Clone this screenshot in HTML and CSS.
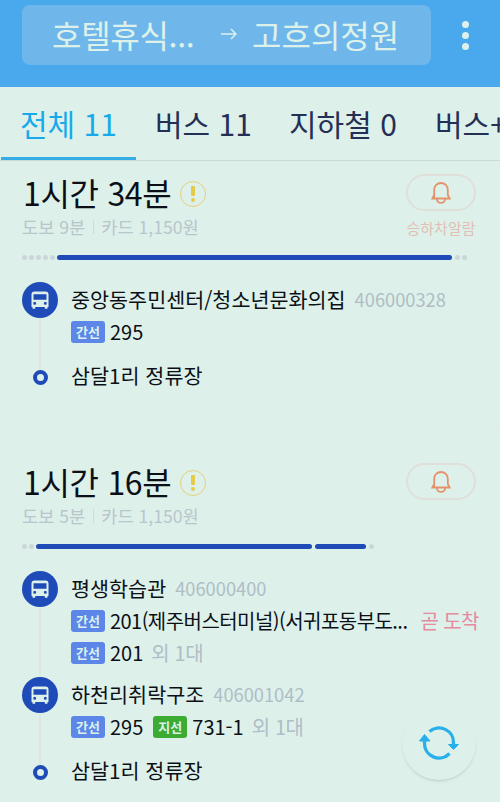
FILE: index.html
```html
<!doctype html>
<html lang="ko">
  <head>
    <meta charset="UTF-8" />
    <meta name="viewport" content="width=device-width, initial-scale=1.0" />
    <title>길찾기</title>
    <link rel="stylesheet" href="styles.css">
  </head>
  <body>
    <svg class="defs">
      <symbol id="bus" viewBox="0 0 18 18">
        <path fill-rule="evenodd" d="M3.5 0.5h11Q17.500 0.500 17.500 3.500V16H16.500V17.800H13.800V16H4.200V17.800H1.500V16H0.500V3.500Q0.500 0.500 3.500 0.500zM2.500 3.200V8.800h13V3.200zM2.200 12.300a1.500 1.500 0 1 0 3 0a1.500 1.500 0 1 0-3 0zM12.800 12.300a1.500 1.500 0 1 0 3 0a1.500 1.500 0 1 0-3 0z" />
      </symbol>
      <symbol id="bell" viewBox="0 0 20 22">
        <path d="M3.200 16V8C3.200 3.800 6.200 1 10 1s6.800 2.800 6.800 7V13L18.600 16.500H1.400L3.200 13M5.800 17c0.600 5.200 7.800 5.200 8.400 0" />
      </symbol>
    </svg>

    <header class="topbar">
      <div class="route">
        <span class="from">호텔휴식...</span>
        <svg class="arrow" viewBox="0 0 16 12"><path d="M0 6H15M10 1l5 5-5 5" /></svg>
        <span class="to">고흐의정원</span>
      </div>
      <div class="more"><i></i><i></i><i></i></div>
    </header>

    <nav class="tabs">
      <div class="tab active">전체 11</div>
      <div class="tab">버스 11</div>
      <div class="tab subway">지하철 0</div>
      <div class="tab">버스+</div>
    </nav>

    <section class="card first">
      <div class="summary">
        <div>
          <h2 class="time">1시간 34분 <span class="warn"></span></h2>
          <div class="detail"><span>도보 9분</span><span>카드 1,150원</span></div>
        </div>
        <div class="alarm">
          <div class="alarm-btn"><svg><use href="#bell" /></svg></div>
          <div class="alarm-label">승하차알람</div>
        </div>
      </div>
      <div class="progress">
        <i></i><i></i><i></i><i></i><i></i>
        <b style="width: 395px"></b>
        <i></i><i></i>
      </div>
      <div class="stop">
        <div class="marker"><span class="bus-icon"><svg><use href="#bus" /></svg></span></div>
        <div>
          <div class="name">중앙동주민센터/청소년문화의집 <small>406000328</small></div>
          <div class="bus"><span class="badge">간선</span><span class="num">295</span></div>
        </div>
      </div>
      <div class="stop dest">
        <div class="marker"><span class="ring"></span></div>
        <div class="name">삼달1리 정류장</div>
      </div>
    </section>

    <section class="card">
      <div class="summary">
        <div>
          <h2 class="time">1시간 16분 <span class="warn"></span></h2>
          <div class="detail"><span>도보 5분</span><span>카드 1,150원</span></div>
        </div>
        <div class="alarm">
          <div class="alarm-btn"><svg><use href="#bell" /></svg></div>
        </div>
      </div>
      <div class="progress">
        <i></i><i></i>
        <b style="width: 276px"></b>
        <b style="width: 51px"></b>
        <i></i>
      </div>
      <div class="stop transfer">
        <div class="marker"><span class="bus-icon"><svg><use href="#bus" /></svg></span></div>
        <div>
          <div class="name">평생학습관 <small>406000400</small></div>
          <div class="bus">
            <span class="badge">간선</span><span class="num long">201(제주버스터미널)(서귀포동부도...</span>
            <span class="soon">곧 도착</span>
          </div>
          <div class="bus"><span class="badge">간선</span><span class="num">201</span><span class="etc">외 1대</span></div>
        </div>
      </div>
      <div class="stop">
        <div class="marker"><span class="bus-icon"><svg><use href="#bus" /></svg></span></div>
        <div>
          <div class="name">하천리취락구조 <small>406001042</small></div>
          <div class="bus">
            <span class="badge">간선</span><span class="num">295</span>
            <span class="badge branch">지선</span><span class="num">731-1</span><span class="etc">외 1대</span>
          </div>
        </div>
      </div>
      <div class="stop dest">
        <div class="marker"><span class="ring"></span></div>
        <div class="name">삼달1리 정류장</div>
      </div>
    </section>

    <div class="refresh">
      <svg viewBox="0 0 40 36">
        <path d="M10.500 6.500A14.500 14.500 0 0 1 34.500 18V22M30.500 28.500A14.500 14.500 0 0 1 5.500 18V13" />
        <path class="head" d="M29.500 19.500L34.500 24.500L39.500 19.500zM0.500 16L5.500 9.500L11 16z" />
      </svg>
    </div>
  </body>
</html>
```

FILE: styles.css
```css
* {
  box-sizing: border-box;
}
body {
  margin: 0;
  width: 500px;
  height: 802px;
  overflow: hidden;
  background-color: #ddf1ea;
  color: #0c0f16;
  font-family: "Noto Sans CJK KR", sans-serif;
  white-space: nowrap;
}
.defs {
  display: none;
}

/* top bar */
.topbar {
  display: flex;
  align-items: flex-start;
  height: 87px;
  padding: 5px 0 0 22px;
  background-color: #4aa8ec;
  color: #ddf1ea;
}
.route {
  display: flex;
  align-items: center;
  width: 409px;
  height: 60px;
  padding: 0 0 2px 30px;
  border-radius: 8px;
  background-color: #6fb7eb;
  font-size: 32px;
  line-height: 58px;
}
.from {
  width: 169px;
  letter-spacing: -0.3px;
}
.arrow {
  width: 16px;
  height: 12px;
  margin-right: 15px;
  fill: none;
  stroke: #ddf1ea;
  stroke-width: 1.5;
}
.more {
  display: flex;
  flex-direction: column;
  gap: 4px;
  margin: 16px 0 0 31px;
}
.more i {
  width: 7px;
  height: 7px;
  border-radius: 50%;
  background-color: #ddf1ea;
}

/* tabs */
.tabs {
  display: flex;
  height: 74px;
  padding-left: 1px;
  overflow: hidden;
  border-bottom: 1px solid #ccd9d9;
  font-size: 30px;
  line-height: 73px;
  color: #252f55;
}
.tab {
  flex: none;
  width: 134px;
  height: 73px;
  padding-left: 19px;
}
.tab.active {
  width: 135px;
  border-bottom: 3px solid #35aee6;
  color: #17aaea;
}
.tab.subway {
  width: 146px;
}

/* route cards */
.card {
  height: 289px;
  padding: 31px 22px 0;
}
.card.first {
  height: 270px;
  padding-top: 12px;
  border-bottom: 1px solid #e0ece7;
}
.summary {
  display: flex;
  justify-content: space-between;
  height: 68px;
}
.time {
  display: flex;
  align-items: center;
  height: 40px;
  margin: 0;
  padding: 0 0 2px 1px;
  font-size: 32px;
  font-weight: 400;
  letter-spacing: -0.3px;
  line-height: 38px;
}
.warn {
  position: relative;
  width: 26px;
  height: 26px;
  margin: 3px 0 0 9px;
  border: 1.5px solid #e5d07a;
  border-radius: 50%;
}
.warn::before,
.warn::after {
  content: "";
  position: absolute;
  left: 10px;
  top: 4px;
  width: 4px;
  height: 10px;
  border-radius: 1px;
  background-color: #e5cb4c;
}
.warn::after {
  top: 16px;
  height: 4px;
  border-radius: 50%;
}
.detail {
  display: flex;
  align-items: center;
  height: 27px;
  font-size: 17.600px;
  color: #b9c5ca;
}
.detail span + span {
  margin-left: 8px;
  padding-left: 8px;
  background: linear-gradient(#d0dad9, #d0dad9) left center / 1px 14px no-repeat;
}
.alarm {
  width: 70px;
  margin-right: 2px;
  text-align: center;
}
.alarm-btn {
  display: flex;
  align-items: center;
  justify-content: center;
  height: 37px;
  margin-top: 1px;
  border: 2px solid #e0dfd9;
  border-radius: 19px;
}
.alarm-btn svg {
  width: 20px;
  height: 22px;
  fill: none;
  stroke: #e3936b;
  stroke-width: 1.8;
}
.alarm-label {
  font-size: 15px;
  line-height: 34px;
  color: #e2beb4;
}

/* walk dots and ride bars */
.progress {
  display: flex;
  align-items: center;
  gap: 2px;
  height: 32px;
  margin-bottom: 9px;
}
.progress i {
  width: 5px;
  height: 5px;
  border-radius: 50%;
  background-color: #cbd6d9;
}
.progress b {
  height: 5px;
  border-radius: 3px;
  background-color: #1f4bb8;
}
.progress b + b {
  margin-left: 1px;
}
.progress b + i {
  margin-left: 1px;
}

/* stops */
.stop {
  display: flex;
  gap: 13px;
}
.stop.transfer > div:last-child {
  padding-bottom: 8px;
}
.marker {
  display: flex;
  flex-direction: column;
  align-items: center;
  flex: none;
  width: 36px;
}
.marker::after {
  content: "";
  flex: 1;
  width: 2px;
  background-color: #dde6df;
}
.bus-icon {
  display: flex;
  align-items: center;
  justify-content: center;
  width: 36px;
  height: 36px;
  border-radius: 50%;
  background-color: #1f4bb8;
}
.bus-icon svg {
  width: 18px;
  height: 18px;
  fill: #ddf1ea;
}
.name {
  display: flex;
  align-items: center;
  height: 34px;
  font-size: 20.700px;
}
.name small {
  margin-left: 9px;
  font-size: 18.300px;
  color: #b0bdc6;
}
.bus {
  display: flex;
  align-items: center;
  height: 32px;
  font-size: 20px;
  line-height: 28px;
}
.badge {
  width: 34px;
  height: 22px;
  margin-right: 5px;
  border-radius: 3px;
  background-color: #5c87e9;
  color: #ddf1ea;
  font-size: 13px;
  font-weight: 700;
  line-height: 21px;
  text-align: center;
}
.badge.branch {
  margin-left: 10px;
  background-color: #3cab32;
}
.num.long {
  letter-spacing: -0.55px;
}
.etc {
  margin-left: 8px;
  letter-spacing: -0.4px;
  color: #b0bdc6;
}
.soon {
  margin-left: 13px;
  letter-spacing: -0.6px;
  color: #e58aa0;
}
.dest .marker {
  flex-direction: column-reverse;
  height: 37px;
}
.dest .name {
  margin-top: 10px;
}
.ring {
  width: 15px;
  height: 15px;
  border: 4px solid #1f4bb8;
  border-radius: 50%;
}

/* floating refresh button */
.refresh {
  position: absolute;
  left: 402px;
  top: 706px;
  display: flex;
  align-items: center;
  justify-content: center;
  width: 74px;
  height: 74px;
  border-radius: 50%;
  background-color: #ddf1ea;
  box-shadow: 0 2px 3px -1px rgba(120, 110, 120, 0.3);
}
.refresh svg {
  width: 40px;
  height: 36px;
  fill: none;
  stroke: #28b0ec;
  stroke-width: 3.300;
}
.refresh .head {
  fill: #28b0ec;
  stroke-width: 1;
}
```
